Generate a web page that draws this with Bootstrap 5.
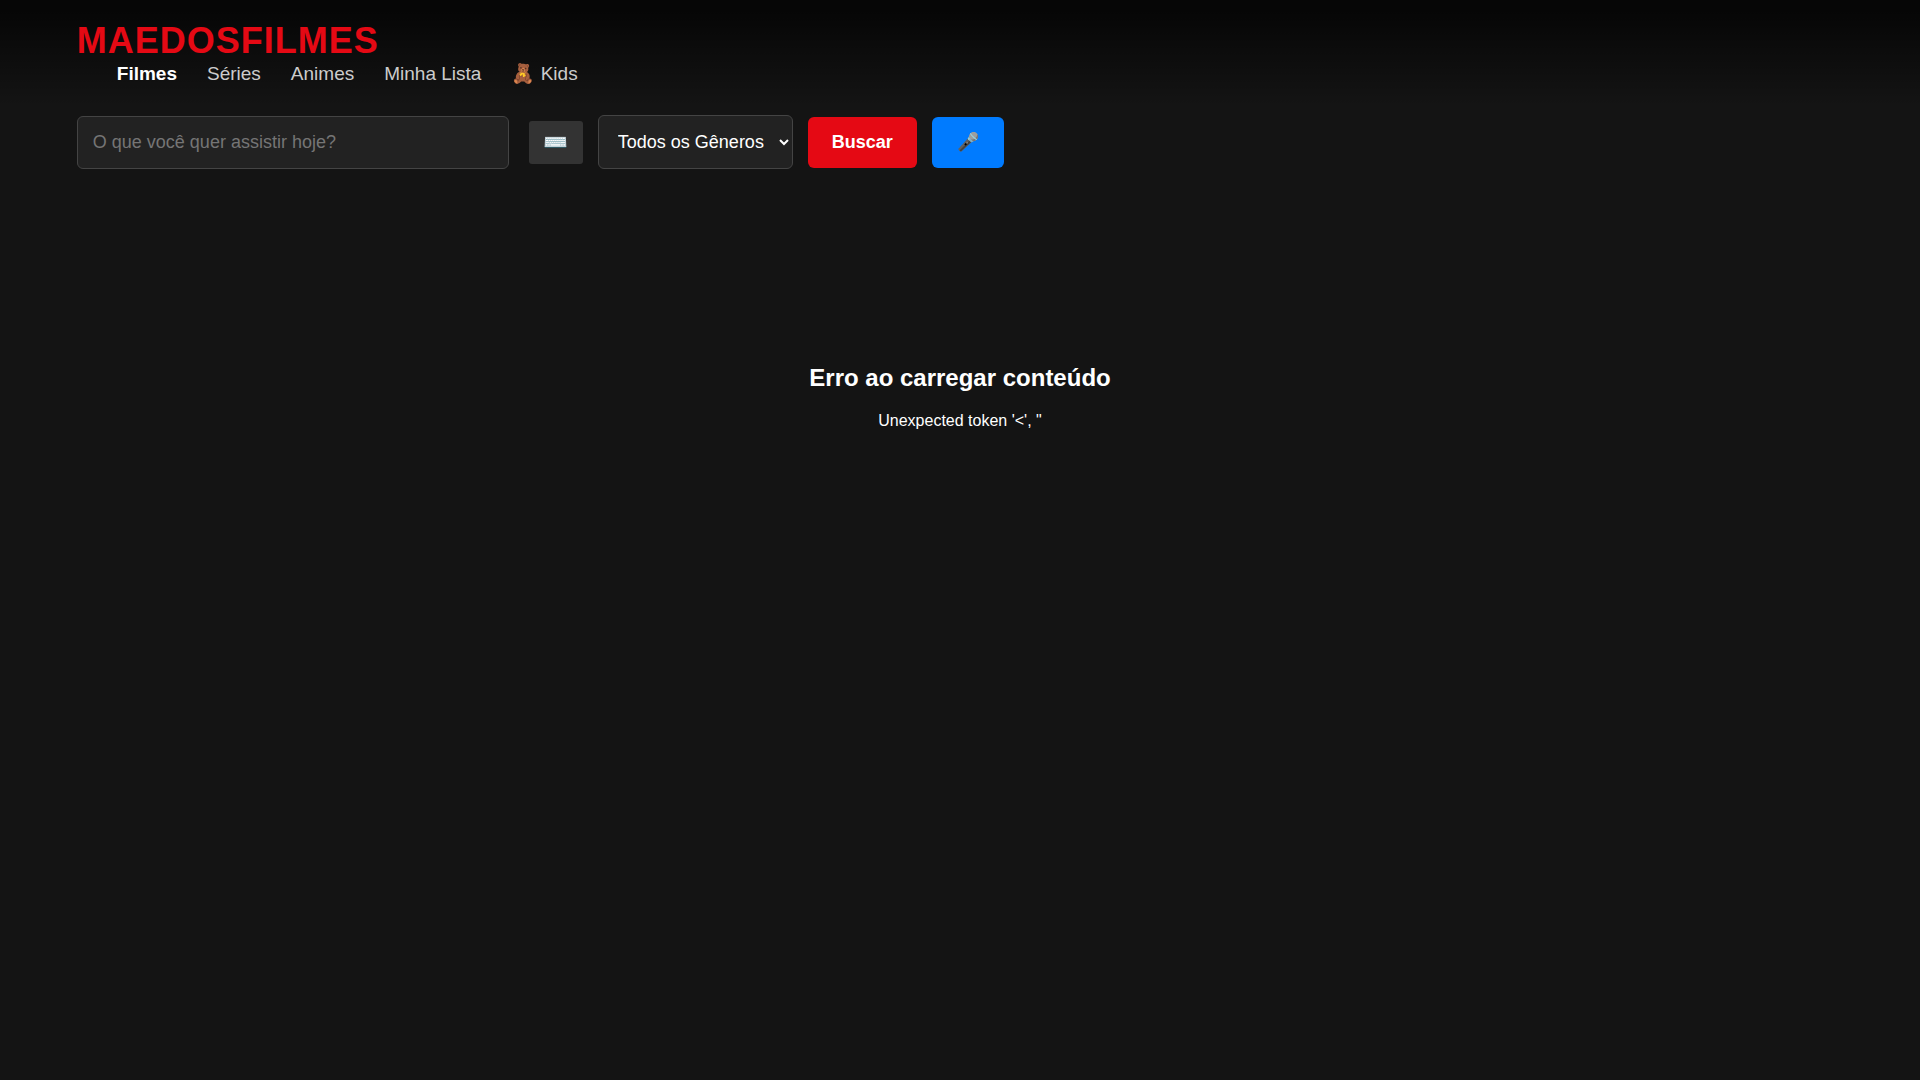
<!DOCTYPE html>
<html lang="pt-BR">
<head>
<meta charset="utf-8">
<meta name="viewport" content="width=device-width, initial-scale=1">
<title>MAEDOSFILMES</title>
<link href="https://cdn.jsdelivr.net/npm/bootstrap@5.3.0/dist/css/bootstrap.min.css" rel="stylesheet">
<style>
body{background:#141414;color:#fff;font-family:"Liberation Sans",Arial,sans-serif;line-height:normal}
.site-header{padding:20px 4%;background:linear-gradient(rgba(0,0,0,.7) 10%,transparent)}
.brand{color:#e50914;font-size:36px;line-height:42px;font-weight:700;letter-spacing:1px;text-decoration:none}
.site-menu{gap:30px;padding-left:40px;font-size:19px;line-height:24px}
.site-menu a{color:#ccc;text-decoration:none}
.site-menu a.active{color:#fff;font-weight:700}
.search-bar{padding:9px 4%;gap:15px;font-size:18px}
.search-box{width:432px;height:53px;padding:15px;border:1px solid #444;border-radius:6px;background:#222;color:#fff;margin-right:5px}
.search-box::placeholder{color:#757575}
.key-btn{width:54px;height:43px;background:#333;border:0;border-radius:3px;font-size:20px}
.genre{width:195px;height:54px;padding:0 12px 0 15px;border:1px solid #444;border-radius:6px;background:#222;color:#fff}
.go-btn{width:109px;height:51px;border:0;border-radius:6px;background:#e50914;color:#fff;font-weight:700}
.mic-btn{height:51px;width:72px;border:0;border-radius:6px;background:#007bff}
.error-note{padding-top:186px}
.error-note h2{font-size:24px;line-height:28px;font-weight:700;margin-bottom:20px}
.error-note p{font-size:16px;line-height:18px}
</style>
</head>
<body>
<header class="site-header">
<a class="brand d-block" href="#">MAEDOSFILMES</a>
<nav class="site-menu d-flex"><a class="active" href="#">Filmes</a><a href="#">Séries</a><a href="#">Animes</a><a href="#">Minha Lista</a><a href="#">🧸 Kids</a></nav>
</header>
<form class="search-bar d-flex align-items-center">
<input class="search-box" type="text" placeholder="O que você quer assistir hoje?" aria-label="Buscar título">
<button class="key-btn" type="button" aria-label="Teclado">⌨️</button>
<select class="genre" aria-label="Gênero"><option>Todos os Gêneros</option></select>
<button class="go-btn" type="button">Buscar</button>
<button class="mic-btn" type="button" aria-label="Voz">🎤</button>
</form>
<main class="error-note text-center"><h2>Erro ao carregar conteúdo</h2><p>Unexpected token '&lt;', "</p></main>
<script src="https://cdn.jsdelivr.net/npm/bootstrap@5.3.0/dist/js/bootstrap.bundle.min.js"></script>
</body>
</html>
